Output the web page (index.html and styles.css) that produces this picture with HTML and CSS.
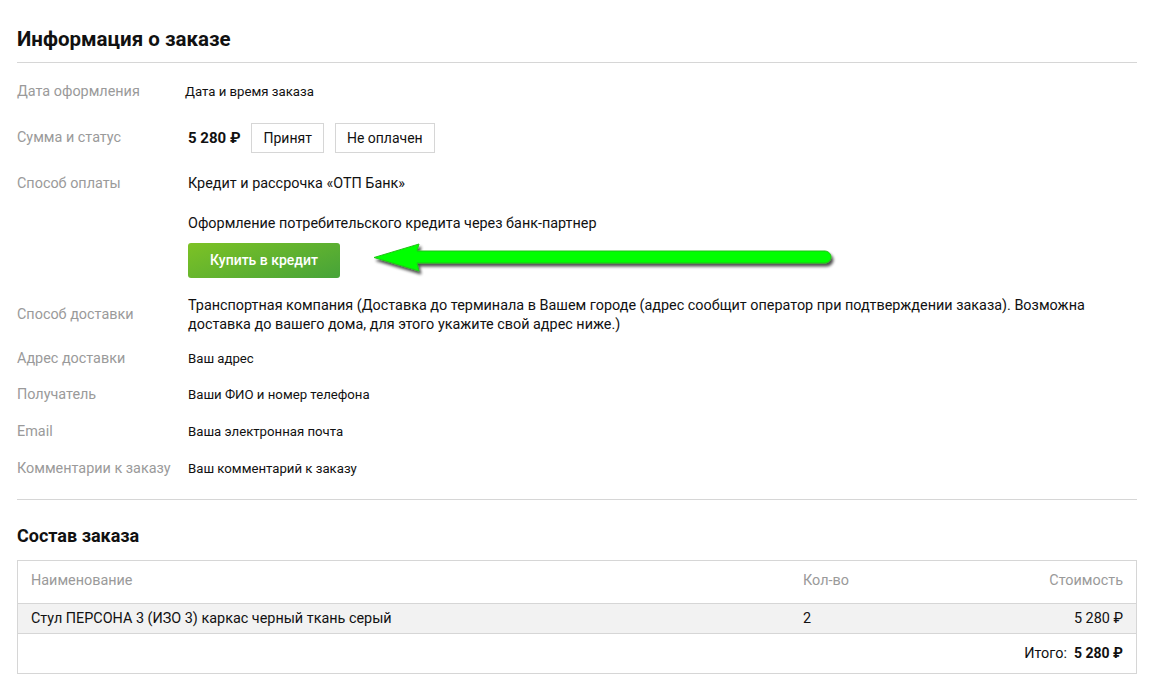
FILE: index.html
```html
<!DOCTYPE html>
<html lang="ru">
<head>
    <meta charset="UTF-8">
    <title>Информация о заказе</title>
    <link rel="stylesheet" href="styles.css">
</head>
<body>
<div class="page">
    <h2 class="title">Информация о заказе</h2>
    <div class="info">
        <div class="row row-date">
            <div class="label">Дата оформления</div>
            <div class="value narrow">Дата и время заказа</div>
        </div>
        <div class="row row-sum">
            <div class="label">Сумма и статус</div>
            <div class="value status">
                <b class="sum">5 280 ₽</b>
                <span class="badge">Принят</span>
                <span class="badge">Не оплачен</span>
            </div>
        </div>
        <div class="row row-pay">
            <div class="label">Способ оплаты</div>
            <div class="value">
                <div class="line">Кредит и рассрочка «ОТП Банк»</div>
                <div class="line sub">Оформление потребительского кредита через банк-партнер</div>
                <a class="btn-credit">Купить в кредит</a>
                <svg class="arrow" width="480" height="50" viewBox="0 0 480 50">
                    <defs>
                        <filter id="sh" x="-10%" y="-50%" width="120%" height="200%">
                            <feGaussianBlur in="SourceAlpha" stdDeviation="1.6"/>
                            <feOffset dx="2" dy="3" result="b"/>
                            <feComponentTransfer><feFuncA type="linear" slope="0.7"/></feComponentTransfer>
                            <feMerge><feMergeNode/><feMergeNode in="SourceGraphic"/></feMerge>
                        </filter>
                    </defs>
                    <g filter="url(#sh)">
                        <path d="M45 14 H453 a6 6 0 0 1 0 12 H45 L47 34 L2 20.5 L47 7 Z" fill="#00ff00" stroke="#22c21a" stroke-width="1"/>
                    </g>
                </svg>
            </div>
        </div>
        <div class="row row-delivery">
            <div class="label">Способ доставки</div>
            <div class="value">Транспортная компания (Доставка до терминала в Вашем городе (адрес сообщит оператор при подтверждении заказа). Возможна доставка до вашего дома, для этого укажите свой адрес ниже.)</div>
        </div>
        <div class="row row-addr">
            <div class="label">Адрес доставки</div>
            <div class="value narrow">Ваш адрес</div>
        </div>
        <div class="row row-tight">
            <div class="label">Получатель</div>
            <div class="value narrow">Ваши ФИО и номер телефона</div>
        </div>
        <div class="row">
            <div class="label">Email</div>
            <div class="value narrow">Ваша электронная почта</div>
        </div>
        <div class="row">
            <div class="label">Комментарии к заказу</div>
            <div class="value narrow">Ваш комментарий к заказу</div>
        </div>
    </div>

    <h3 class="subtitle">Состав заказа</h3>
    <table class="items">
        <thead>
            <tr>
                <th class="c-name">Наименование</th>
                <th class="c-qty">Кол-во</th>
                <th class="c-price">Стоимость</th>
            </tr>
        </thead>
        <tbody>
            <tr class="item">
                <td class="c-name">Стул ПЕРСОНА 3 (ИЗО 3) каркас черный ткань серый</td>
                <td class="c-qty">2</td>
                <td class="c-price">5 280 ₽</td>
            </tr>
            <tr class="total">
                <td colspan="3">Итого:&nbsp; <b>5 280 ₽</b></td>
            </tr>
        </tbody>
    </table>
</div>
</body>
</html>
```

FILE: styles.css
```css
body {
    margin: 0;
    background: #fff;
    color: #111;
    font-family: Roboto, "Liberation Sans", sans-serif;
}
.page {
    width: 1120px;
    padding: 0 17px;
}
.title {
    margin: 0;
    padding-top: 26px;
    height: 36px;
    line-height: 26px;
    font-size: 20.5px;
    font-weight: bold;
    border-bottom: 1px solid #d6d6d6;
}
.info {
    padding: 11px 0 20px;
    border-bottom: 1px solid #d6d6d6;
}
.row {
    display: flex;
    align-items: center;
    min-height: 20px;
    margin-top: 17px;
    font-size: 14.4px;
    line-height: 20px;
}
.label {
    width: 171px;
    flex-shrink: 0;
    color: #9a9a9a;
}
.value {
    flex: 1;
}
.narrow {
    font-size: 13.2px;
}
.row-date {
    margin-top: 0;
    height: 36px;
}
.row-date .value {
    margin-left: -3px;
}
.row-sum {
    margin-top: 13px;
}
.status {
    display: flex;
    align-items: center;
    gap: 11px;
}
.sum {
    font-size: 15px;
}
.badge {
    display: inline-block;
    height: 28px;
    line-height: 28px;
    padding: 0 11px;
    border: 1px solid #d6d6d6;
    font-size: 14px;
}
.row-pay {
    align-items: flex-start;
    margin-top: 21px;
}
.row-pay .value {
    position: relative;
}
.sub {
    margin-top: 20px;
}
.btn-credit {
    display: block;
    width: 152px;
    height: 35px;
    margin-top: 9px;
    border-radius: 3px;
    background: linear-gradient(160deg, #7dc225, #46a339);
    color: #fff;
    font-size: 14px;
    font-weight: 500;
    line-height: 35px;
    text-align: center;
}
.arrow {
    position: absolute;
    left: 184px;
    top: 63px;
}
.row-delivery {
    margin-top: 18px;
}
.row-delivery .value {
    line-height: 19px;
    padding-right: 20px;
}
.row-addr {
    margin-top: 15px;
}
.row-tight {
    margin-top: 16px;
}
.subtitle {
    margin: 0;
    padding-top: 24px;
    height: 36px;
    line-height: 24px;
    font-size: 18px;
    font-weight: bold;
}
.items {
    width: 100%;
    border-collapse: collapse;
    border: 1px solid #d6d6d6;
    font-size: 14.4px;
}
.items th {
    height: 39px;
    padding: 0 13px 3px;
    font-weight: normal;
    color: #9a9a9a;
    text-align: left;
}
.items td {
    padding: 0 13px;
}
.items .c-qty {
    width: 154px;
    padding-left: 0;
}
.items .c-price {
    width: 140px;
    text-align: right;
}
.item {
    height: 30px;
    background: #f2f2f2;
    border-top: 1px solid #d6d6d6;
    border-bottom: 1px solid #d6d6d6;
}
.total {
    height: 40px;
}
.total td {
    text-align: right;
}
.total b {
    font-size: 14px;
}
```
